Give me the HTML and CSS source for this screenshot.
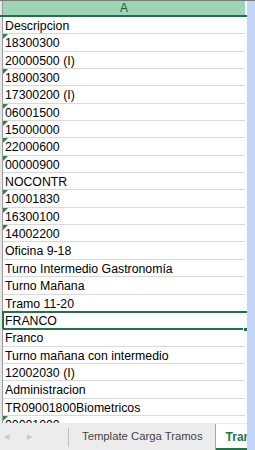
FILE: index.html
```html
<!DOCTYPE html>
<html>
<head>
    <meta charset="UTF-8">
    <title>Hoja</title>
    <link rel="stylesheet" href="styles.css">
</head>
<body>
<div class="window">
    <div class="main">
        <div class="colhead">
            <div class="rh"></div>
            <div class="acol">A</div>
        </div>
        <div class="rows">
            <div class="row"><div class="rh"></div><div class="cell">Descripcion</div></div>
            <div class="row"><div class="rh"></div><div class="cell err">18300300</div></div>
            <div class="row"><div class="rh"></div><div class="cell">20000500 (I)</div></div>
            <div class="row"><div class="rh"></div><div class="cell err">18000300</div></div>
            <div class="row"><div class="rh"></div><div class="cell">17300200 (I)</div></div>
            <div class="row"><div class="rh"></div><div class="cell err">06001500</div></div>
            <div class="row"><div class="rh"></div><div class="cell err">15000000</div></div>
            <div class="row"><div class="rh"></div><div class="cell err">22000600</div></div>
            <div class="row"><div class="rh"></div><div class="cell err">00000900</div></div>
            <div class="row"><div class="rh"></div><div class="cell">NOCONTR</div></div>
            <div class="row"><div class="rh"></div><div class="cell err">10001830</div></div>
            <div class="row"><div class="rh"></div><div class="cell err">16300100</div></div>
            <div class="row"><div class="rh"></div><div class="cell err">14002200</div></div>
            <div class="row"><div class="rh"></div><div class="cell">Oficina 9-18</div></div>
            <div class="row"><div class="rh"></div><div class="cell">Turno Intermedio Gastronomía</div></div>
            <div class="row"><div class="rh"></div><div class="cell">Turno Mañana</div></div>
            <div class="row"><div class="rh"></div><div class="cell">Tramo 11-20</div></div>
            <div class="row selected"><div class="rh"></div><div class="cell">FRANCO</div><span class="handle"></span></div>
            <div class="row"><div class="rh"></div><div class="cell">Franco</div></div>
            <div class="row"><div class="rh"></div><div class="cell">Turno mañana con intermedio</div></div>
            <div class="row"><div class="rh"></div><div class="cell">12002030 (I)</div></div>
            <div class="row"><div class="rh"></div><div class="cell">Administracion</div></div>
            <div class="row"><div class="rh"></div><div class="cell">TR09001800Biometricos</div></div>
            <div class="row"><div class="rh"></div><div class="cell err">00001000</div></div>
        </div>
        <div class="tabs">
            <div class="arrows">
                <span class="arrow">&#9664;</span>
                <span class="arrow">&#9654;</span>
            </div>
            <div class="sep"></div>
            <div class="tab">Template Carga Tramos</div>
            <div class="tab active">Tramos</div>
        </div>
    </div>
    <div class="side"></div>
</div>
</body>
</html>
```

FILE: styles.css
```css
* {
    margin: 0;
    padding: 0;
    box-sizing: border-box;
}

body {
    width: 255px;
    height: 450px;
    overflow: hidden;
    background-color: #fff;
    font-family: "Liberation Sans", Arial, sans-serif;
    font-size: 12.3px;
    color: #000;
}

.window {
    display: flex;
    height: 450px;
    border-top: 1px solid #7a7a7a;
}

.main {
    width: 247px;
    flex: none;
    display: flex;
    flex-direction: column;
    overflow: hidden;
}

/*右边的蓝条*/
.side {
    flex: 1;
    background-color: #c3d6f7;
}

/*列头*/
.colhead {
    display: flex;
    height: 16px;
    flex: none;
    border-bottom: 2px solid #217346;
}

.rh {
    width: 3px;
    flex: none;
    background-color: #e6e6e6;
    border-right: 1px solid #9c9c9c;
}

.acol {
    width: 242px;
    background-color: #9fd5b7;
    color: #1b5e36;
    text-align: center;
    line-height: 14px;
    font-size: 12px;
}

.rows {
    flex: 1;
    overflow: hidden;
}

.row {
    display: flex;
    height: 17.35px;
    position: relative;
}

.cell {
    width: 242px;
    border-bottom: 1px solid #d9d9d9;
    padding: 2px 0 0 2px;
    line-height: 15px;
    white-space: nowrap;
    overflow: hidden;
    position: relative;
}

/*绿色的小三角*/
.err::before {
    content: "";
    position: absolute;
    top: 0;
    left: 0;
    border-top: 5px solid #1f8a47;
    border-right: 5px solid transparent;
}

/*选中的单元格*/
.selected::after {
    content: "";
    position: absolute;
    top: -1px;
    left: 2px;
    width: 244px;
    bottom: -1px;
    border: 2px solid #217346;
}

/*右下角的填充柄*/
.handle {
    position: absolute;
    right: -1px;
    bottom: -3px;
    width: 5px;
    height: 5px;
    background-color: #217346;
    border: 1px solid #fff;
    z-index: 2;
}

/*底部的工作表标签*/
.tabs {
    height: 27px;
    flex: none;
    display: flex;
    align-items: stretch;
    background-color: #ececec;
    font-size: 11.3px;
    color: #444;
}

.arrows {
    width: 68px;
    flex: none;
    display: flex;
    align-items: center;
    gap: 18px;
    padding-left: 4px;
}

.arrow {
    font-size: 7px;
    color: #c8c8c8;
}

.sep {
    width: 1px;
    flex: none;
    margin: 5px 0 3px;
    background-color: #bdbdbd;
}

.tab {
    flex: none;
    padding: 6px 12px 0 13px;
    margin-top: 1px;
    border-right: 1px solid #a6a6a6;
    white-space: nowrap;
}

.tab.active {
    background-color: #fff;
    color: #217346;
    font-weight: bold;
    font-size: 12px;
    padding-left: 10px;
    border-bottom: 2px solid #217346;
}
```
